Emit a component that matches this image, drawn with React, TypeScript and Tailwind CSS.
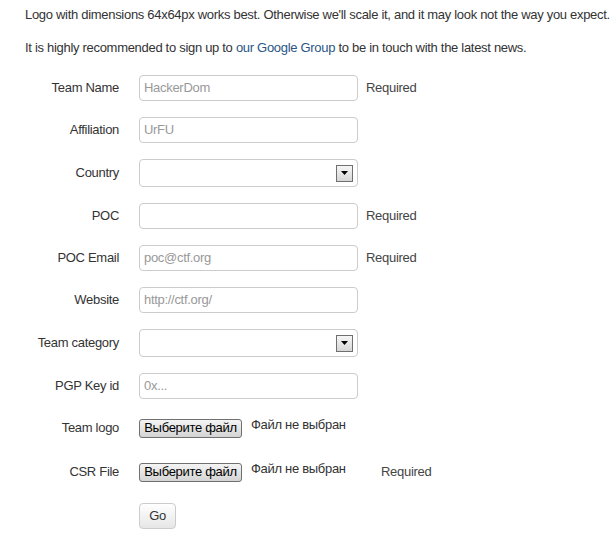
import React from "react";

const font = "font-['Liberation_Sans',Arial,Helvetica,sans-serif]";

function Label({ children }: { children: React.ReactNode }) {
  return <div className="w-[94px] mr-[20px] text-right shrink-0">{children}</div>;
}

function Required() {
  return <span className="ml-[8px] text-[#444]">Required</span>;
}

function TextRow({ label, placeholder, required }: { label: string; placeholder?: string; required?: boolean }) {
  return (
    <div className="flex items-center mb-[16px]">
      <Label>{label}</Label>
      <div className="w-[219px] h-[26px] border border-[#ccc] rounded-[4px] bg-white px-[4px] flex items-center text-[#999]">
        {placeholder}
      </div>
      {required && <Required />}
    </div>
  );
}

function SelectRow({ label }: { label: string }) {
  return (
    <div className="flex items-center mb-[16px]">
      <Label>{label}</Label>
      <div className="w-[219px] h-[28px] border border-[#ccc] rounded-[4px] bg-white flex items-center justify-end pr-[4px]">
        <div className="w-[17px] h-[17px] border border-[#6f6f6f] bg-gradient-to-b from-[#f6f6f6] to-[#d6d6d6] flex items-center justify-center">
          <svg width="7" height="4" viewBox="0 0 7 4">
            <polygon points="0,0 7,0 3.5,4" fill="#000" />
          </svg>
        </div>
      </div>
    </div>
  );
}

function FileRow({ label, required }: { label: string; required?: boolean }) {
  return (
    <div className="flex items-center h-[26px] mb-[18px]">
      <Label>{label}</Label>
      <div className="w-[234px] flex items-center">
        <div className="w-[103px] h-[19px] border border-[#707070] rounded-[3px] bg-gradient-to-b from-[#f4f4f4] to-[#d4d4d4] text-black flex items-center justify-center">
          Выберите файл
        </div>
        <span className="ml-[9px] -mt-[6px] text-[#333]">Файл не выбран</span>
      </div>
      {required && <Required />}
    </div>
  );
}

export default function App() {
  return (
    <div className={`${font} text-[13px] leading-[18px] tracking-[-0.3px] text-[#333] bg-white min-h-[535px] pl-[25px] pt-[6px]`}>
      <p className="whitespace-nowrap">
        Logo with dimensions 64x64px works best. Otherwise we'll scale it, and it may look not the way you expect.
      </p>
      <p className="mt-[15px] whitespace-nowrap">
        It is highly recommended to sign up to <a className="text-[#2a5585]">our Google Group</a> to be in touch with
        the latest news.
      </p>
      <form className="mt-[18px]">
        <TextRow label="Team Name" placeholder="HackerDom" required />
        <TextRow label="Affiliation" placeholder="UrFU" />
        <SelectRow label="Country" />
        <TextRow label="POC" required />
        <TextRow label="POC Email" placeholder="poc@ctf.org" required />
        <TextRow label="Website" placeholder="http://ctf.org/" />
        <SelectRow label="Team category" />
        <TextRow label="PGP Key id" placeholder="0x..." />
        <FileRow label="Team logo" />
        <FileRow label="CSR File" required />
        <div className="flex">
          <div className="w-[114px]" />
          <button
            type="button"
            className="w-[37px] h-[26px] border border-[#ccc] rounded-[4px] bg-gradient-to-b from-white to-[#e6e6e6] text-[#333]"
          >
            Go
          </button>
        </div>
      </form>
    </div>
  );
}
